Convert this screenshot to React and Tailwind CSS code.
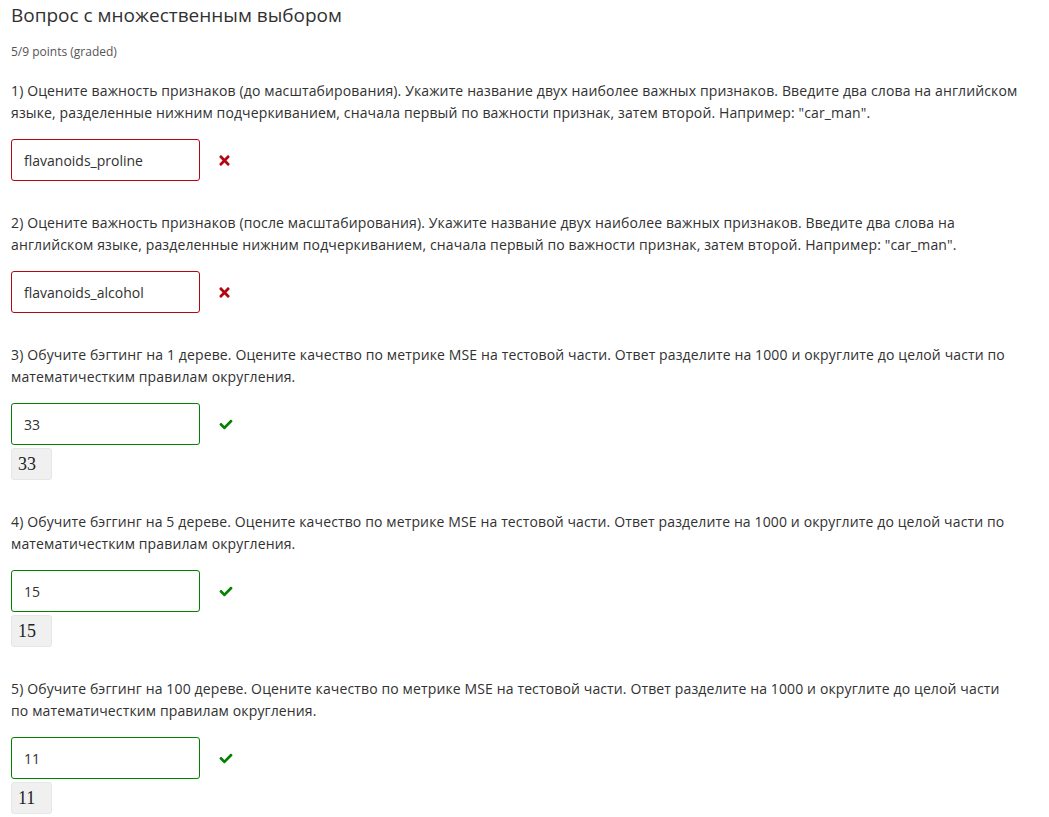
import React from "react";
import { FaTimes, FaCheck } from "react-icons/fa";

const font = { fontFamily: '"Open Sans", "Noto Sans", sans-serif' };

function Question({ lines, value, correct, preview }) {
  return (
    <div className="mb-[31px]">
      <p className="text-[14px] leading-[22px] tracking-[0.13px] text-[#313131] whitespace-nowrap">
        {lines.map((l, i) => (
          <React.Fragment key={i}>
            {l}
            {i < lines.length - 1 && <br />}
          </React.Fragment>
        ))}
      </p>
      <div className="mt-[15px] flex items-center">
        <div
          className={`w-[189px] h-[42px] rounded-[3px] border flex items-center pl-[12px] text-[14px] text-[#313131] ${
            correct ? "border-[#008100]" : "border-[#b20610]"
          }`}
        >
          {value}
        </div>
        <div className="ml-[18px] flex items-center">
          {correct ? (
            <FaCheck className="text-[#008100] w-[16px] h-[13px]" />
          ) : (
            <FaTimes className="text-[#b20610] w-[13px] h-[15px]" />
          )}
        </div>
      </div>
      {preview && (
        <div
          className="mt-[3px] w-[41px] h-[32px] rounded-[3px] bg-[#f0f0f0] border border-[#e6e6e6] flex items-center pl-[6px] text-[18px] text-[#222]"
          style={{ fontFamily: '"Liberation Serif", "DejaVu Serif", serif' }}
        >
          {value}
        </div>
      )}
    </div>
  );
}

export default function App() {
  return (
    <div className="bg-white min-h-[817px] px-[11px] pt-[1px]" style={font}>
      <h3 className="text-[19px] leading-[28px] text-[#313131] font-normal">
        Вопрос с множественным выбором
      </h3>
      <div className="mt-[15px] text-[12px] leading-[16px] text-[#555]">5/9 points (graded)</div>
      <div className="mt-[20px]">
        <Question
          lines={[
            "1) Оцените важность признаков (до масштабирования). Укажите название двух наиболее важных признаков. Введите два слова на английском",
            'языке, разделенные нижним подчеркиванием, сначала первый по важности признак, затем второй. Например: "car_man".',
          ]}
          value="flavanoids_proline"
          correct={false}
        />
        <Question
          lines={[
            "2) Оцените важность признаков (после масштабирования). Укажите название двух наиболее важных признаков. Введите два слова на",
            'английском языке, разделенные нижним подчеркиванием, сначала первый по важности признак, затем второй. Например: "car_man".',
          ]}
          value="flavanoids_alcohol"
          correct={false}
        />
        <Question
          lines={[
            "3) Обучите бэгтинг на 1 дереве. Оцените качество по метрике MSE на тестовой части. Ответ разделите на 1000 и округлите до целой части по",
            "математичестким правилам округления.",
          ]}
          value="33"
          correct
          preview
        />
        <Question
          lines={[
            "4) Обучите бэггинг на 5 дереве. Оцените качество по метрике MSE на тестовой части. Ответ разделите на 1000 и округлите до целой части по",
            "математичестким правилам округления.",
          ]}
          value="15"
          correct
          preview
        />
        <Question
          lines={[
            "5) Обучите бэггинг на 100 дереве. Оцените качество по метрике MSE на тестовой части. Ответ разделите на 1000 и округлите до целой части",
            "по математичестким правилам округления.",
          ]}
          value="11"
          correct
          preview
        />
      </div>
    </div>
  );
}
